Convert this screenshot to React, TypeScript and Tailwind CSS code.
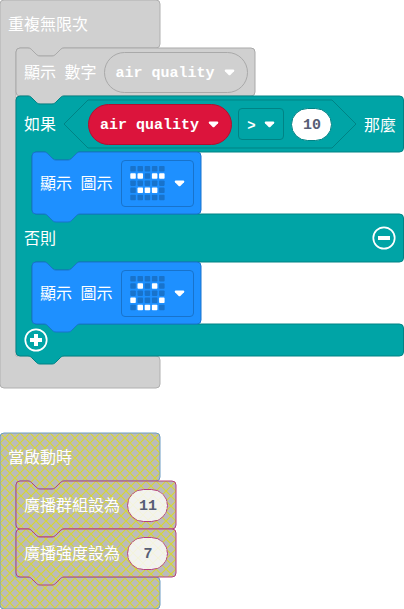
import type { ReactNode } from 'react';

const NOTCH_R = 'c2 0 3 1 4 2l4 4c1 1 2 2 4 2h12c2 0 3 -1 4 -2l4 -4c1 -1 2 -2 4 -2';
const NOTCH_L = 'c-2 0 -3 1 -4 2l-4 4c-1 1 -2 2 -4 2h-12c-2 0 -3 -1 -4 -2l-4 -4c-1 -1 -2 -2 -4 -2';

const statementPath = (w: number, h: number) =>
  `M0 4a4 4 0 0 1 4 -4h8${NOTCH_R}H${w - 4}a4 4 0 0 1 4 4V${h - 4}a4 4 0 0 1 -4 4H48${NOTCH_L}H4a4 4 0 0 1 -4 -4z`;

const hatPath = (w: number, bodyEnd: number, h: number) =>
  `M0 4a4 4 0 0 1 4 -4H${w - 4}a4 4 0 0 1 4 4V44a4 4 0 0 1 -4 4H64${NOTCH_L}H20a4 4 0 0 0 -4 4V${bodyEnd}H${w - 4}a4 4 0 0 1 4 4V${h - 4}a4 4 0 0 1 -4 4H4a4 4 0 0 1 -4 -4z`;

const IF_PATH = `M0 4a4 4 0 0 1 4 -4h8${NOTCH_R}H383.500a4 4 0 0 1 4 4V52a4 4 0 0 1 -4 4H64${NOTCH_L}H20a4 4 0 0 0 -4 4V114a4 4 0 0 0 4 4H383.500a4 4 0 0 1 4 4V162a4 4 0 0 1 -4 4H64${NOTCH_L}H20a4 4 0 0 0 -4 4V224a4 4 0 0 0 4 4H383.500a4 4 0 0 1 4 4V256a4 4 0 0 1 -4 4H48${NOTCH_L}H4a4 4 0 0 1 -4 -4z`;

function Outline({ d, fill, stroke }: { d: string; fill: string; stroke: string }) {
  return (
    <svg className="pointer-events-none absolute inset-0 size-full overflow-visible" aria-hidden="true">
      <path d={d} fill={fill} stroke={stroke} />
    </svg>
  );
}

function Caret() {
  return (
    <svg className="h-[7px] w-[11px] shrink-0" viewBox="0 0 11 7" aria-hidden="true">
      <path d="M1.500 0.500H9.500Q11 1 10 2.300L6.600 5.800Q5.500 6.800 4.400 5.800L1 2.300Q0 1 1.500 0.500z" fill="#fff" />
    </svg>
  );
}

function Label({ children }: { children: ReactNode }) {
  return <span className="shrink-0 whitespace-pre pb-[2px] text-[16px] leading-5 [word-spacing:5px]">{children}</span>;
}

function Variable({ tone }: { tone: string }) {
  return (
    <div className={`flex h-[41px] w-[144px] shrink-0 items-center rounded-full border pl-[11px] ${tone}`}>
      <span className="w-[108px] whitespace-pre pt-1 font-['Liberation_Mono',monospace] text-[15px] font-bold leading-5">air quality</span>
      <Caret />
    </div>
  );
}

function NumberField({ value, tone, hatched }: { value: string; tone: string; hatched?: boolean }) {
  return (
    <div className={`relative flex h-[33px] w-[41px] shrink-0 items-center justify-center overflow-hidden rounded-full border pl-px pt-1 font-['Liberation_Mono',monospace] text-[15px] font-bold text-[#575e75] ${tone}`}>
      {hatched && (
        <svg className="absolute inset-0 size-full" aria-hidden="true">
          <rect width="100%" height="100%" fill="url(#hatch-light)" />
        </svg>
      )}
      <span className="relative">{value}</span>
    </div>
  );
}

function Icon({ rows }: { rows: string[] }) {
  return (
    <div className="flex h-[47px] w-[73px] shrink-0 items-center rounded-[4px] border border-[#1873cc] pl-2">
      <svg className="h-[35px] w-[35px] shrink-0" viewBox="0 0 35 35" aria-hidden="true">
        {rows.map((row, y) =>
          row.split('').map((c, x) => (
            <rect key={`${x}-${y}`} x={0.3 + x * 7.2} y={y * 7.2} width="5.500" height="5.500" rx="0.800" fill={c === '#' ? '#fff' : '#1873cc'} />
          )),
        )}
      </svg>
      <div className="ml-[9px]"><Caret /></div>
    </div>
  );
}

function ShowIcon({ rows }: { rows: string[] }) {
  return (
    <div className="relative ml-4 flex h-[62px] w-[169px] items-center pl-2">
      <Outline d={statementPath(169, 62)} fill="#1e90ff" stroke="#1873cc" />
      <div className="relative flex items-center gap-2">
        <Label>顯示 圖示</Label>
        <Icon rows={rows} />
      </div>
    </div>
  );
}

function RadioBlock({ label, value }: { label: string; value: string }) {
  return (
    <div className="relative ml-4 flex h-12 w-[160px] items-center pl-2">
      <Outline d={statementPath(160, 48)} fill="url(#hatch)" stroke="#b4417c" />
      <div className="relative flex items-center gap-[7px]">
        <Label>{label}</Label>
        <NumberField value={value} tone="border-[#b4417c] bg-[#f2f2f0]" hatched />
      </div>
    </div>
  );
}

function RoundButton({ plus }: { plus?: boolean }) {
  return (
    <svg className="size-6 shrink-0" viewBox="0 0 24 24" aria-hidden="true">
      <circle cx="12" cy="12" r="10.700" fill="none" stroke="#fff" strokeWidth="1.700" />
      <path d={plus ? 'M6 12h12M12 6v12' : 'M6 12h12'} stroke="#fff" strokeWidth="4" />
    </svg>
  );
}

export default function App() {
  return (
    <main className="h-[609px] w-[404px] overflow-hidden bg-white font-['Noto_Sans_CJK_TC',sans-serif] text-white">
      <svg className="absolute size-0" aria-hidden="true">
        <defs>
          <pattern id="hatch" width="10" height="10" patternUnits="userSpaceOnUse">
            <rect width="10" height="10" fill="#bbb" />
            <path d="M0 0L10 10M10 0L0 10" stroke="#d6d633" strokeWidth="1.200" />
          </pattern>
          <pattern id="hatch-light" width="10" height="10" patternUnits="userSpaceOnUse">
            <path d="M0 0L10 10M10 0L0 10" stroke="#f3f3dc" strokeWidth="1.200" />
          </pattern>
        </defs>
      </svg>

      <section className="relative h-[388px] w-[404px]">
        <Outline d={hatPath(160, 356, 388)} fill="#d0d0d0" stroke="#b0b0b0" />
        <div className="relative flex h-12 items-center pl-2"><Label>重複無限次</Label></div>
        <div className="relative ml-4 flex h-12 w-[239px] items-center pl-2">
          <Outline d={statementPath(239, 48)} fill="#d0d0d0" stroke="#a9a9a9" />
          <div className="relative flex items-center gap-[7px]">
            <Label>顯示 數字</Label>
            <Variable tone="border-[#a9a9a9]" />
          </div>
        </div>
        <div className="relative ml-4 h-[260px] w-[388px]">
          <Outline d={IF_PATH} fill="#00a4a6" stroke="#008385" />
          <div className="relative flex h-14 items-center pl-2">
            <Label>如果</Label>
            <div className="relative ml-2 flex h-12 w-[292px] items-center pl-6">
              <Outline d="M24 0H268L292 24L268 48H24L0 24z" fill="none" stroke="#008385" />
              <div className="relative flex items-center">
                <Variable tone="border-[#b01030] bg-[#dc143c]" />
                <div className="ml-[6px] flex h-8 w-[46px] items-center gap-[8px] rounded-[4px] border border-[#008385] pl-2">
                  <span className="w-[9px] pt-1 text-center font-['Liberation_Mono',monospace] text-[14px] font-bold">&gt;</span>
                  <Caret />
                </div>
                <div className="ml-[7px]"><NumberField value="10" tone="border-[#008385] bg-white" /></div>
              </div>
            </div>
            <div className="ml-2"><Label>那麼</Label></div>
          </div>
          <ShowIcon rows={['.....', '##.##', '.....', '.###.', '.....']} />
          <div className="relative flex h-12 items-center justify-between px-2">
            <Label>否則</Label>
            <RoundButton />
          </div>
          <ShowIcon rows={['.....', '.#.#.', '.....', '#...#', '.###.']} />
          <div className="relative flex h-8 items-center pl-2"><RoundButton plus /></div>
        </div>
      </section>

      <section className="relative mt-[45px] h-[176px] w-[404px]">
        <Outline d={hatPath(160, 144, 176)} fill="url(#hatch)" stroke="#6c9cc4" />
        <div className="relative flex h-12 items-center pl-2"><Label>當啟動時</Label></div>
        <RadioBlock label="廣播群組設為" value="11" />
        <RadioBlock label="廣播強度設為" value="7" />
      </section>
    </main>
  );
}
